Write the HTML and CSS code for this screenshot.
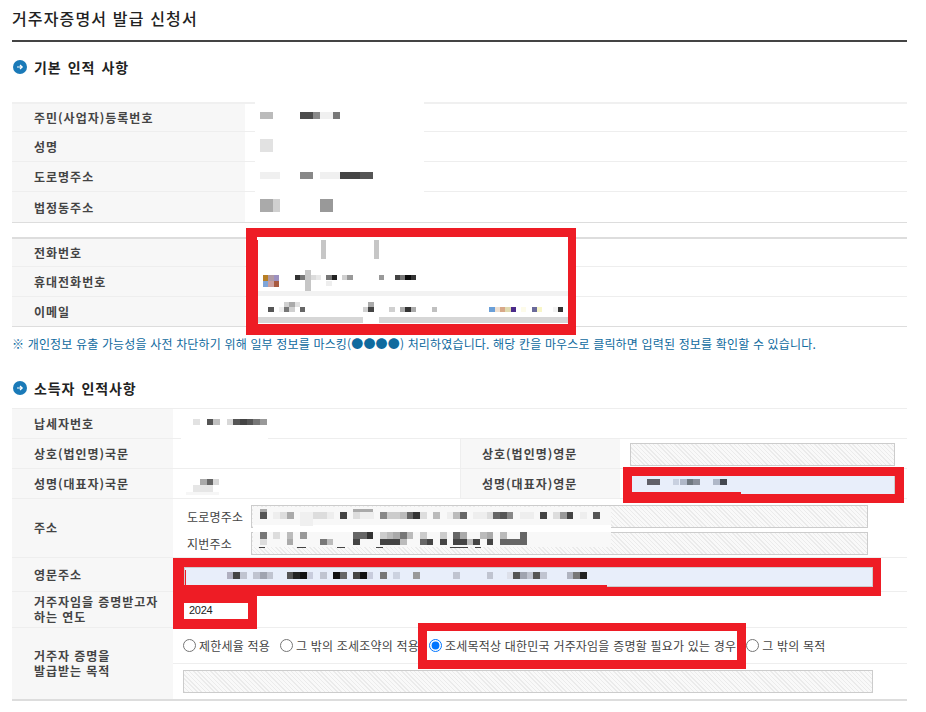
FILE: index.html
```html
<!DOCTYPE html>
<html lang="ko">
<head>
<meta charset="utf-8">
<title>거주자증명서 발급 신청서</title>
<link rel="stylesheet" href="styles.css">
</head>
<body>
<main class="page">
  <h1 class="title">거주자증명서 발급 신청서</h1>

  <h2 class="heading heading-first">
    <svg class="bullet" viewBox="0 0 14 14"><circle cx="7" cy="7" r="7" fill="#1a7ab8"/><path d="M4 7h5M7 5l2.2 2L7 9" fill="none" stroke="#fff" stroke-width="1.2"/></svg>
    기본 인적 사항
  </h2>

  <section class="table table-top">
    <div class="row"><div class="label wide">주민(사업자)등록번호</div><div class="value"></div></div>
    <div class="row"><div class="label wide">성명</div><div class="value"></div></div>
    <div class="row"><div class="label wide">도로명주소</div><div class="value"></div></div>
    <div class="row"><div class="label wide">법정동주소</div><div class="value"></div></div>
  </section>

  <section class="table table-contact">
    <div class="row"><div class="label wide">전화번호</div><div class="value"></div></div>
    <div class="row"><div class="label wide">휴대전화번호</div><div class="value"></div></div>
    <div class="row"><div class="label wide">이메일</div><div class="value"></div></div>
  </section>

  <p class="note">※ 개인정보 유출 가능성을 사전 차단하기 위해 일부 정보를 마스킹(●●●●) 처리하였습니다. 해당 칸을 마우스로 클릭하면 입력된 정보를 확인할 수 있습니다.</p>

  <h2 class="heading heading-second">
    <svg class="bullet" viewBox="0 0 14 14"><circle cx="7" cy="7" r="7" fill="#1a7ab8"/><path d="M4 7h5M7 5l2.2 2L7 9" fill="none" stroke="#fff" stroke-width="1.2"/></svg>
    소득자 인적사항
  </h2>

  <section class="table table-income">
    <div class="row"><div class="label narrow">납세자번호</div><div class="value"></div></div>
    <div class="row">
      <div class="label narrow">상호(법인명)국문</div><div class="value half"></div>
      <div class="label mid">상호(법인명)영문</div><div class="value half-input"><input class="field hatch eng" readonly></div>
    </div>
    <div class="row">
      <div class="label narrow">성명(대표자)국문</div><div class="value half"></div>
      <div class="label mid">성명(대표자)영문</div><div class="value half-input"><input class="field blue eng" readonly></div>
    </div>
    <div class="row row-address">
      <div class="label narrow lifted">주소</div>
      <div class="value stack">
        <div class="addr"><span class="addr-name">도로명주소</span><input class="field hatch addr-input" readonly></div>
        <div class="addr"><span class="addr-name">지번주소</span><input class="field hatch addr-input" readonly></div>
      </div>
    </div>
    <div class="row row-english">
      <div class="label narrow">영문주소</div>
      <div class="value padded"><input class="field blue full" readonly></div>
    </div>
    <div class="row row-year">
      <div class="label narrow two-line lifted">거주자임을 증명받고자<br>하는 연도</div>
      <div class="value padded"><input class="field year" value="2024" readonly></div>
    </div>
    <div class="row row-purpose">
      <div class="label narrow two-line lifted">거주자 증명을<br>발급받는 목적</div>
      <div class="value stack">
        <div class="radios">
          <label class="radio r1"><input type="radio" name="purpose">제한세율 적용</label>
          <label class="radio r2"><input type="radio" name="purpose">그 밖의 조세조약의 적용</label>
          <label class="radio r3"><input type="radio" name="purpose" checked>조세목적상 대한민국 거주자임을 증명할 필요가 있는 경우</label>
          <label class="radio r4"><input type="radio" name="purpose">그 밖의 목적</label>
        </div>
        <div class="other"><input class="field hatch other-input" readonly></div>
      </div>
    </div>
  </section>
</main>

<svg class="overlay" width="926" height="712" viewBox="0 0 926 712" shape-rendering="crispEdges" aria-hidden="true">
  <!-- masks over the first table -->
  <rect x="255" y="102" width="169" height="91" fill="#fff"/>
  <rect x="260" y="112" width="13" height="7" fill="#bbb"/>
  <rect x="300" y="112" width="13" height="7" fill="#4c4c4c"/><rect x="313" y="112" width="7" height="7" fill="#888"/><rect x="320" y="112" width="13" height="7" fill="#f0f0f0"/><rect x="333" y="112" width="7" height="7" fill="#777"/>
  <rect x="260" y="139" width="13" height="13" fill="#e2e2e2"/>
  <rect x="260" y="172" width="20" height="7" fill="#f0f0f0"/><rect x="300" y="172" width="13" height="7" fill="#888"/><rect x="320" y="172" width="20" height="7" fill="#f0f0f0"/><rect x="340" y="172" width="20" height="7" fill="#444"/><rect x="360" y="172" width="13" height="7" fill="#555"/>
  <rect x="260" y="199" width="13" height="13" fill="#aaa"/><rect x="273" y="199" width="7" height="13" fill="#d0d0d0"/><rect x="320" y="199" width="13" height="13" fill="#999"/>

  <!-- contact frame -->
  <rect x="257" y="237" width="311" height="87" fill="#fff"/>
  <rect x="246" y="228" width="330" height="9" fill="#ee1c25"/><rect x="246" y="237" width="11" height="87" fill="#ee1c25"/><rect x="568" y="237" width="8" height="87" fill="#ee1c25"/><rect x="246" y="324" width="330" height="11" fill="#ee1c25"/>
  <rect x="257" y="240" width="1" height="84" fill="#ee1c25"/>
  <rect x="321" y="240" width="5" height="19" fill="#c6c6c6"/><rect x="374" y="240" width="5" height="19" fill="#c6c6c6"/>
  <rect x="263" y="275" width="5" height="6" fill="#b87f24"/><rect x="268" y="275" width="6" height="6" fill="#b09aa4"/><rect x="274" y="275" width="5" height="6" fill="#9c90c0"/>
  <rect x="263" y="281" width="5" height="6" fill="#7ea5d8"/><rect x="268" y="281" width="6" height="6" fill="#cb9f9f"/><rect x="274" y="281" width="5" height="6" fill="#a85a40"/>
  <rect x="295" y="275" width="5" height="5" fill="#333"/><rect x="300" y="275" width="5" height="5" fill="#777"/><rect x="305" y="270" width="6" height="21" fill="#c6c6c6"/><rect x="311" y="275" width="5" height="5" fill="#dcdcdc"/><rect x="316" y="275" width="5" height="5" fill="#e8e8e8"/><rect x="326" y="275" width="6" height="5" fill="#777"/><rect x="332" y="275" width="5" height="5" fill="#222"/><rect x="326" y="281" width="6" height="5" fill="#eee"/><rect x="342" y="275" width="5" height="5" fill="#d0d0d0"/><rect x="347" y="275" width="6" height="5" fill="#999"/><rect x="379" y="275" width="5" height="5" fill="#999"/><rect x="395" y="275" width="5" height="5" fill="#444"/><rect x="400" y="275" width="5" height="5" fill="#777"/><rect x="405" y="275" width="6" height="5" fill="#0a0a0a"/><rect x="411" y="275" width="5" height="5" fill="#333"/>
  <rect x="258" y="291" width="310" height="5" fill="#f2f2f2"/>
  <rect x="284" y="302" width="5" height="5" fill="#d0d0d0"/><rect x="289" y="302" width="6" height="5" fill="#aaa"/><rect x="295" y="302" width="5" height="5" fill="#e0e0e0"/><rect x="368" y="302" width="6" height="5" fill="#aaa"/>
  <rect x="268" y="307" width="6" height="5" fill="#555"/><rect x="279" y="307" width="5" height="5" fill="#eee"/><rect x="284" y="307" width="5" height="5" fill="#777"/><rect x="289" y="307" width="6" height="5" fill="#d0d0d0"/><rect x="300" y="307" width="5" height="5" fill="#666"/><rect x="363" y="307" width="5" height="5" fill="#d0d0d0"/><rect x="368" y="307" width="6" height="5" fill="#444"/><rect x="389" y="307" width="6" height="5" fill="#d0d0d0"/><rect x="400" y="307" width="5" height="5" fill="#aaa"/><rect x="405" y="307" width="6" height="5" fill="#333"/><rect x="411" y="307" width="5" height="5" fill="#aaa"/><rect x="432" y="307" width="5" height="5" fill="#c0c0c0"/>
  <rect x="489" y="307" width="6" height="5" fill="#6a9fd8"/><rect x="495" y="307" width="5" height="5" fill="#f0e0d0"/><rect x="500" y="307" width="5" height="5" fill="#d8a888"/><rect x="505" y="307" width="6" height="5" fill="#e0dab0"/><rect x="511" y="307" width="5" height="5" fill="#4a2a8a"/><rect x="521" y="307" width="5" height="5" fill="#fdfbea"/><rect x="532" y="307" width="5" height="5" fill="#6a6a9a"/><rect x="537" y="307" width="5" height="5" fill="#f8f6c8"/><rect x="553" y="307" width="5" height="5" fill="#f2f2f2"/><rect x="558" y="307" width="5" height="5" fill="#333"/>
  <rect x="258" y="317" width="105" height="6" fill="#d6d6d6"/><rect x="379" y="317" width="189" height="6" fill="#d6d6d6"/>

  <!-- masks over the income table -->
  <rect x="181" y="409" width="87" height="31" fill="#fff"/>
  <rect x="193" y="419" width="7" height="6" fill="#e2e2e2"/><rect x="207" y="419" width="6" height="6" fill="#555"/><rect x="213" y="419" width="7" height="6" fill="#c0c0c0"/><rect x="227" y="419" width="6" height="6" fill="#d8d8d8"/><rect x="233" y="419" width="7" height="6" fill="#555"/><rect x="240" y="419" width="7" height="6" fill="#444"/><rect x="247" y="419" width="6" height="6" fill="#555"/><rect x="253" y="419" width="7" height="6" fill="#777"/><rect x="260" y="419" width="7" height="6" fill="#999"/>
  <rect x="186" y="469" width="33" height="26" fill="#fff"/>
  <rect x="200" y="479" width="7" height="6" fill="#aaa"/><rect x="207" y="479" width="6" height="6" fill="#666"/><rect x="213" y="479" width="6" height="6" fill="#d8d8d8"/><rect x="193" y="485" width="20" height="7" fill="#e6e6e6"/><rect x="186" y="492" width="33" height="3" fill="#f6f6f6"/>

  <!-- name frame -->
  <rect x="623" y="467" width="281" height="9" fill="#ee1c25"/><rect x="623" y="476" width="9" height="27" fill="#ee1c25"/><rect x="895" y="476" width="9" height="27" fill="#ee1c25"/><rect x="623" y="494" width="281" height="9" fill="#ee1c25"/><rect x="632" y="492" width="109" height="2" fill="#ee1c25"/>
  <rect x="647" y="479" width="13" height="6" fill="#606068"/><rect x="673" y="479" width="6" height="6" fill="#c8d0e0"/><rect x="680" y="479" width="7" height="6" fill="#b0b8c8"/><rect x="687" y="479" width="6" height="6" fill="#707880"/><rect x="693" y="479" width="7" height="6" fill="#8a8f9a"/><rect x="713" y="479" width="7" height="6" fill="#b0b8c8"/><rect x="720" y="479" width="7" height="6" fill="#444850"/>

  <!-- address mosaic -->
  <rect x="253" y="507" width="358" height="18" fill="#f8f8f8"/><rect x="253" y="525" width="358" height="7" fill="#fff"/><rect x="253" y="532" width="358" height="15" fill="#f8f8f8"/>
  <g>
    <rect x="273" y="512" width="7" height="7" fill="#eee"/><rect x="300" y="512" width="13" height="14" fill="#f0f0f0"/><rect x="327" y="512" width="7" height="7" fill="#eee"/><rect x="360" y="512" width="14" height="7" fill="#eee"/><rect x="447" y="512" width="6" height="7" fill="#eee"/><rect x="473" y="512" width="14" height="7" fill="#eee"/><rect x="520" y="512" width="14" height="7" fill="#eee"/><rect x="580" y="512" width="7" height="7" fill="#eee"/>
    <rect x="260" y="512" width="7" height="7" fill="#555"/><rect x="260" y="509" width="7" height="3" fill="#aaa"/><rect x="280" y="512" width="7" height="7" fill="#ddd"/><rect x="287" y="512" width="7" height="7" fill="#aaa"/><rect x="313" y="512" width="14" height="7" fill="#ddd"/><rect x="340" y="512" width="7" height="7" fill="#444"/><rect x="353" y="512" width="7" height="7" fill="#ddd"/><rect x="353" y="509" width="20" height="3" fill="#aaa"/><rect x="380" y="512" width="7" height="7" fill="#888"/><rect x="387" y="512" width="13" height="7" fill="#ccc"/><rect x="400" y="512" width="7" height="7" fill="#bbb"/><rect x="407" y="512" width="6" height="7" fill="#666"/><rect x="413" y="512" width="7" height="7" fill="#333"/><rect x="420" y="512" width="7" height="7" fill="#ddd"/><rect x="433" y="512" width="7" height="7" fill="#bbb"/><rect x="453" y="512" width="7" height="7" fill="#bbb"/><rect x="460" y="512" width="7" height="7" fill="#666"/><rect x="487" y="512" width="6" height="7" fill="#ddd"/><rect x="493" y="512" width="7" height="7" fill="#666"/><rect x="500" y="512" width="7" height="7" fill="#555"/><rect x="507" y="512" width="6" height="7" fill="#888"/><rect x="540" y="512" width="7" height="7" fill="#444"/><rect x="553" y="512" width="7" height="7" fill="#ddd"/><rect x="560" y="512" width="7" height="7" fill="#999"/><rect x="567" y="512" width="6" height="7" fill="#444"/><rect x="593" y="512" width="7" height="7" fill="#555"/>
    <rect x="260" y="532" width="7" height="7" fill="#777"/><rect x="273" y="532" width="7" height="7" fill="#ddd"/><rect x="287" y="532" width="6" height="7" fill="#bbb"/><rect x="300" y="532" width="7" height="7" fill="#999"/><rect x="353" y="532" width="14" height="7" fill="#666"/><rect x="367" y="532" width="6" height="7" fill="#333"/><rect x="380" y="532" width="7" height="7" fill="#ccc"/><rect x="387" y="532" width="6" height="7" fill="#bbb"/><rect x="393" y="532" width="7" height="7" fill="#aaa"/><rect x="400" y="532" width="7" height="7" fill="#777"/><rect x="407" y="532" width="6" height="7" fill="#bbb"/><rect x="420" y="532" width="7" height="7" fill="#ccc"/><rect x="440" y="532" width="7" height="7" fill="#ccc"/><rect x="453" y="532" width="7" height="7" fill="#666"/><rect x="460" y="532" width="7" height="7" fill="#aaa"/><rect x="480" y="532" width="7" height="7" fill="#bbb"/><rect x="487" y="532" width="6" height="7" fill="#aaa"/><rect x="500" y="532" width="7" height="7" fill="#bbb"/><rect x="520" y="532" width="7" height="7" fill="#666"/>
    <rect x="260" y="539" width="7" height="6" fill="#ddd"/><rect x="287" y="539" width="6" height="6" fill="#aaa"/><rect x="320" y="539" width="7" height="6" fill="#777"/><rect x="327" y="539" width="6" height="6" fill="#bbb"/><rect x="353" y="539" width="7" height="6" fill="#444"/><rect x="380" y="539" width="20" height="6" fill="#444"/><rect x="400" y="539" width="7" height="6" fill="#bbb"/><rect x="420" y="539" width="7" height="6" fill="#666"/><rect x="427" y="539" width="6" height="6" fill="#444"/><rect x="440" y="539" width="7" height="6" fill="#444"/><rect x="453" y="539" width="14" height="6" fill="#444"/><rect x="467" y="539" width="6" height="6" fill="#bbb"/><rect x="473" y="539" width="7" height="6" fill="#444"/><rect x="487" y="539" width="6" height="6" fill="#444"/><rect x="500" y="539" width="20" height="6" fill="#666"/><rect x="520" y="539" width="7" height="6" fill="#666"/>
    <rect x="259" y="547" width="6" height="1" fill="#444"/><rect x="297" y="547" width="9" height="1" fill="#444"/><rect x="337" y="547" width="8" height="1" fill="#444"/><rect x="376" y="547" width="7" height="1" fill="#444"/><rect x="450" y="547" width="18" height="1" fill="#444"/><rect x="475" y="547" width="6" height="1" fill="#444"/>
  </g>

  <!-- english address frame -->
  <rect x="173" y="558" width="708" height="9" fill="#ee1c25"/><rect x="173" y="567" width="11" height="62" fill="#ee1c25"/><rect x="873" y="567" width="8" height="20" fill="#ee1c25"/><rect x="184" y="587" width="697" height="9" fill="#ee1c25"/><rect x="184" y="585" width="423" height="2" fill="#ee1c25"/><rect x="185" y="570" width="1" height="15" fill="#ee1c25"/>
  <rect x="227" y="572" width="6" height="7" fill="#b0b0c0"/><rect x="233" y="572" width="7" height="7" fill="#444"/><rect x="240" y="572" width="7" height="7" fill="#c0c4d0"/><rect x="253" y="572" width="7" height="7" fill="#c0c4d0"/><rect x="260" y="572" width="7" height="7" fill="#a0a4b0"/><rect x="267" y="572" width="6" height="7" fill="#c0c4d0"/><rect x="287" y="572" width="6" height="7" fill="#555"/><rect x="293" y="572" width="7" height="7" fill="#222"/><rect x="300" y="572" width="7" height="7" fill="#111"/><rect x="307" y="572" width="6" height="7" fill="#c8ccdc"/><rect x="320" y="572" width="7" height="7" fill="#c0c4d0"/><rect x="333" y="572" width="7" height="7" fill="#111"/><rect x="340" y="572" width="7" height="7" fill="#666"/><rect x="353" y="572" width="7" height="7" fill="#444"/><rect x="360" y="572" width="7" height="7" fill="#111"/><rect x="367" y="572" width="6" height="7" fill="#c8ccdc"/><rect x="380" y="572" width="7" height="7" fill="#777"/><rect x="393" y="572" width="7" height="7" fill="#ccd2e0"/><rect x="413" y="572" width="7" height="7" fill="#999"/><rect x="453" y="572" width="7" height="7" fill="#c0c4d0"/><rect x="487" y="572" width="6" height="7" fill="#c0c4d0"/><rect x="507" y="572" width="6" height="7" fill="#dde0ea"/><rect x="513" y="572" width="7" height="7" fill="#555"/><rect x="520" y="572" width="7" height="7" fill="#a0a4b0"/><rect x="527" y="572" width="6" height="7" fill="#c0c4d0"/><rect x="533" y="572" width="7" height="7" fill="#555"/><rect x="540" y="572" width="7" height="7" fill="#c0c4d0"/><rect x="567" y="572" width="6" height="7" fill="#b0b4c0"/><rect x="573" y="572" width="7" height="7" fill="#777"/><rect x="580" y="572" width="7" height="7" fill="#222"/>

  <!-- year frame -->
  <rect x="184" y="596" width="73" height="7" fill="#ee1c25"/><rect x="248" y="603" width="9" height="26" fill="#ee1c25"/><rect x="173" y="619" width="84" height="10" fill="#ee1c25"/>

  <!-- purpose frame -->
  <rect x="418" y="623" width="328" height="8" fill="#ee1c25"/><rect x="418" y="631" width="9" height="29" fill="#ee1c25"/><rect x="737" y="631" width="9" height="29" fill="#ee1c25"/><rect x="418" y="660" width="328" height="9" fill="#ee1c25"/>
</svg>
</body>
</html>
```

FILE: styles.css
```css
* { box-sizing: border-box; }
html, body { margin: 0; padding: 0; background: #fff; }
body {
  position: relative;
  width: 926px;
  height: 712px;
  overflow: hidden;
  font-family: "Noto Sans CJK KR", "Noto Sans", sans-serif;
  color: #444;
}
.page { width: 907px; padding-left: 12px; }
.title {
  height: 42px;
  margin: 0;
  padding-top: 5px;
  border-bottom: 2px solid #444;
  font-size: 16px;
  line-height: 26px;
  font-weight: 500;
  letter-spacing: 1.15px;
  color: #222;
}
.heading {
  display: flex;
  align-items: center;
  gap: 7px;
  height: 20px;
  margin: 0;
  font-size: 14px;
  line-height: 20px;
  font-weight: 700;
  letter-spacing: .85px;
  color: #222;
  word-spacing: 1.5px;
}
.heading-first { margin-top: 15px; margin-bottom: 25px; }
.heading-second { margin-top: 25px; margin-bottom: 10px; }
.bullet { width: 14px; height: 14px; flex: none; margin-left: 1px; }

.table { border-top: 2px solid #f0f0f0; }
.table-top { border-bottom: 1px solid #ddd; }
.table-contact { margin-top: 14px; border-top-color: #ddd; border-bottom: 1px solid #ddd; }
.table-income { border-top: 1px solid #eee; border-bottom: 2px solid #ddd; }
.row { display: flex; height: 30px; border-bottom: 1px solid #eee; }
.row:last-child { border-bottom: 0; }
.table-top .row:first-child, .table-contact .row:first-child { height: 28px; }
.table-contact .row:last-child { height: 29px; }

.label {
  display: flex;
  align-items: center;
  padding-left: 22px;
  background: #f7f7f7;
  font-size: 12px;
  font-weight: 700;
  letter-spacing: 1px;
  color: #444;
  flex: none;
}
.wide { width: 233px; }
.narrow { width: 161px; letter-spacing: .95px; }
.mid { width: 160px; padding-left: 21px; border-left: 1px solid #eee; }
.two-line { line-height: 15px; }
.lifted { padding-bottom: 2px; }
.value { flex: 1; min-width: 0; display: flex; align-items: center; }
.half { flex: none; width: 287px; }
.half-input { flex: none; width: 287px; padding: 1px 0 0 10px; }

.field {
  display: block;
  height: 23px;
  padding: 0 4px;
  border: 1px solid #ccc;
  background: #fff;
  font: 11px "Liberation Sans", Arial, sans-serif;
  letter-spacing: -.3px;
  color: #222;
  outline: 0;
}
.hatch {
  background: repeating-linear-gradient(45deg, #ebebeb 0 1px, #f9f9f9 1px 3px);
}
.blue { background: #e8eefa; }
.eng { width: 265px; }

.row-address { height: 59px; }
.stack { flex-direction: column; align-items: stretch; }
.addr { display: flex; align-items: center; height: 26px; padding-left: 14px; }
.row-address .stack { justify-content: center; padding-top: 3px; gap: 1px; }
.addr-name { width: 64px; flex: none; font-size: 12px; letter-spacing: .2px; }
.addr-input { width: 617px; }

.padded { padding-left: 11px; }
.row-english { height: 34px; }
.row-english .value { padding-top: 5px; }
.full { width: 689px; height: 20px; }
.row-year { height: 36px; }
.year { width: 64px; height: 16px; padding: 0 4px; border-color: #fff; }
.row-purpose { height: 71px; }

.radios {
  display: flex;
  align-items: center;
  gap: 10px;
  height: 36px;
  padding-left: 10px;
  border-bottom: 1px solid #eee;
}
.radio {
  display: flex;
  align-items: center;
  gap: 3px;
  font-size: 12px;
  letter-spacing: .2px;
  white-space: nowrap;
  color: #444;
}
.radio input { margin: 0; width: 13px; height: 13px; }
.other { padding: 6px 0 0 10px; }
.other-input { width: 690px; }

.note {
  height: 18px;
  margin: 8px 0 0;
  font-size: 12px;
  line-height: 18px;
  letter-spacing: .16px;
  color: #0f6a9e;
  white-space: nowrap;
}
.overlay { position: absolute; left: 0; top: 0; pointer-events: none; }
```
